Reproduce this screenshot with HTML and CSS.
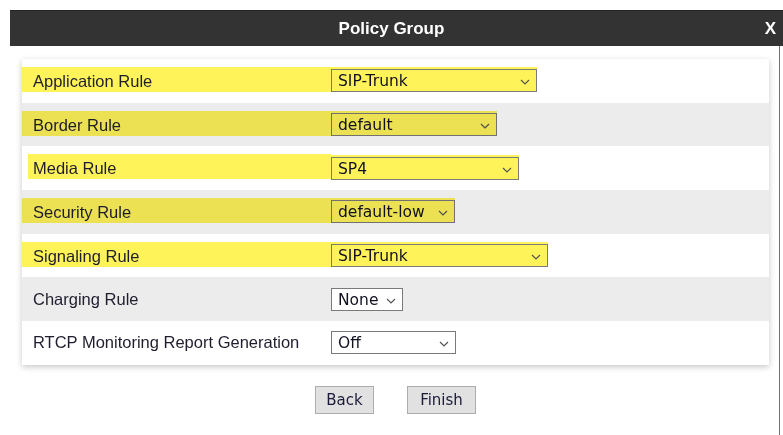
FILE: index.html
```html
<!DOCTYPE html>
<html lang="en">
<head>
    <meta charset="UTF-8">
    <title>Policy Group</title>
    <link rel="stylesheet" href="styles.css">
</head>
<body>

<div class="dialog">
    <div class="dialog-title">
        <span></span>
        <span class="title-text">Policy Group</span>
        <span class="close">X</span>
    </div>

    <div class="dialog-body">
        <div class="form-card">
            <div class="form-row">
                <div class="label"><span class="mark">Application Rule</span></div>
                <div class="select marked" style="width: 206px;">
                    <span>SIP-Trunk</span>
                    <svg class="chev" width="10" height="6" viewBox="0 0 10 6"><path d="M1 1 L5 5 L9 1" fill="none" stroke="#555" stroke-width="1.2"/></svg>
                </div>
            </div>
            <div class="form-row alt">
                <div class="label"><span class="mark">Border Rule</span></div>
                <div class="select marked" style="width: 166px;">
                    <span>default</span>
                    <svg class="chev" width="10" height="6" viewBox="0 0 10 6"><path d="M1 1 L5 5 L9 1" fill="none" stroke="#555" stroke-width="1.2"/></svg>
                </div>
            </div>
            <div class="form-row">
                <div class="label"><span class="mark mark-short">Media Rule</span></div>
                <div class="select marked" style="width: 188px;">
                    <span>SP4</span>
                    <svg class="chev" width="10" height="6" viewBox="0 0 10 6"><path d="M1 1 L5 5 L9 1" fill="none" stroke="#555" stroke-width="1.2"/></svg>
                </div>
            </div>
            <div class="form-row alt">
                <div class="label"><span class="mark">Security Rule</span></div>
                <div class="select marked" style="width: 124px;">
                    <span>default-low</span>
                    <svg class="chev" width="10" height="6" viewBox="0 0 10 6"><path d="M1 1 L5 5 L9 1" fill="none" stroke="#555" stroke-width="1.2"/></svg>
                </div>
            </div>
            <div class="form-row">
                <div class="label"><span class="mark">Signaling Rule</span></div>
                <div class="select marked" style="width: 217px;">
                    <span>SIP-Trunk</span>
                    <svg class="chev" width="10" height="6" viewBox="0 0 10 6"><path d="M1 1 L5 5 L9 1" fill="none" stroke="#555" stroke-width="1.2"/></svg>
                </div>
            </div>
            <div class="form-row alt">
                <div class="label"><span class="plain">Charging Rule</span></div>
                <div class="select" style="width: 72px;">
                    <span>None</span>
                    <svg class="chev" width="10" height="6" viewBox="0 0 10 6"><path d="M1 1 L5 5 L9 1" fill="none" stroke="#555" stroke-width="1.2"/></svg>
                </div>
            </div>
            <div class="form-row">
                <div class="label"><span class="plain">RTCP Monitoring Report Generation</span></div>
                <div class="select" style="width: 125px;">
                    <span>Off</span>
                    <svg class="chev" width="10" height="6" viewBox="0 0 10 6"><path d="M1 1 L5 5 L9 1" fill="none" stroke="#555" stroke-width="1.2"/></svg>
                </div>
            </div>
        </div>

        <div class="buttons">
            <button class="btn btn-back">Back</button>
            <button class="btn btn-finish">Finish</button>
        </div>
    </div>
</div>

</body>
</html>
```

FILE: styles.css
```css
body {
    margin: 0;
    padding: 0;
    background-color: #ffffff;
    font-family: "Liberation Sans", Arial, sans-serif;
    color: #1e1e2e;
}

.dialog {
    margin: 10px 0 0 10px;
    width: 773px;
}

.dialog-title {
    height: 36px;
    background-color: #333333;
    border-top: 1px solid #262626;
    box-sizing: border-box;
    color: #ffffff;
    font-weight: bold;
    font-size: 17px;
    display: grid;
    grid-template-columns: 1fr auto 1fr;
    align-items: center;
}

.title-text {
    padding-right: 10px;
}

.close {
    justify-self: end;
    padding-right: 7px;
    font-size: 17px;
}

.dialog-body {
    width: 770px;
    box-sizing: border-box;
    padding: 13px 10px 0 12px;
    border-right: 1px solid #6e747a;
    height: 389px;
}

.form-card {
    background-color: #ffffff;
    box-shadow: 0 2px 6px rgba(0, 0, 0, 0.22);
}

.form-row {
    display: flex;
    align-items: center;
    height: 43.7px;
}

.form-row.alt {
    background-color: #ececec;
}

.label {
    width: 309px;
    font-size: 16.5px;
}

.mark,
.plain {
    display: block;
    height: 25px;
    line-height: 29px;
    padding-left: 11px;
    margin-top: -3px;
}

.mark {
    background-color: #fff35a;
    mix-blend-mode: multiply;
}

.mark-short {
    margin-left: 6px;
    padding-left: 5px;
}

.plain {
    margin-top: 0;
    line-height: 25px;
}

.select {
    height: 23px;
    box-sizing: border-box;
    border: 1px solid #7a7a7a;
    background-color: #ffffff;
    display: flex;
    align-items: center;
    justify-content: space-between;
    padding: 1px 6px 0 6px;
    font-family: "DejaVu Sans", Tahoma, sans-serif;
    font-size: 15.5px;
    color: #111122;
}

.select.marked {
    background-color: #fff35a;
    mix-blend-mode: multiply;
    box-shadow: 0 -2px 0 0 #fff35a;
}

.chev {
    flex-shrink: 0;
    margin-top: 2px;
}

.buttons {
    display: flex;
    justify-content: center;
    gap: 33px;
    margin-top: 21px;
}

.btn {
    height: 28px;
    background-color: #e1e1e1;
    border: 1px solid #adadad;
    border-radius: 0;
    font-family: "DejaVu Sans", Tahoma, sans-serif;
    font-size: 15px;
    color: #1a1a3a;
    padding: 0;
}

.btn-back {
    width: 59px;
}

.btn-finish {
    width: 69px;
}
```
